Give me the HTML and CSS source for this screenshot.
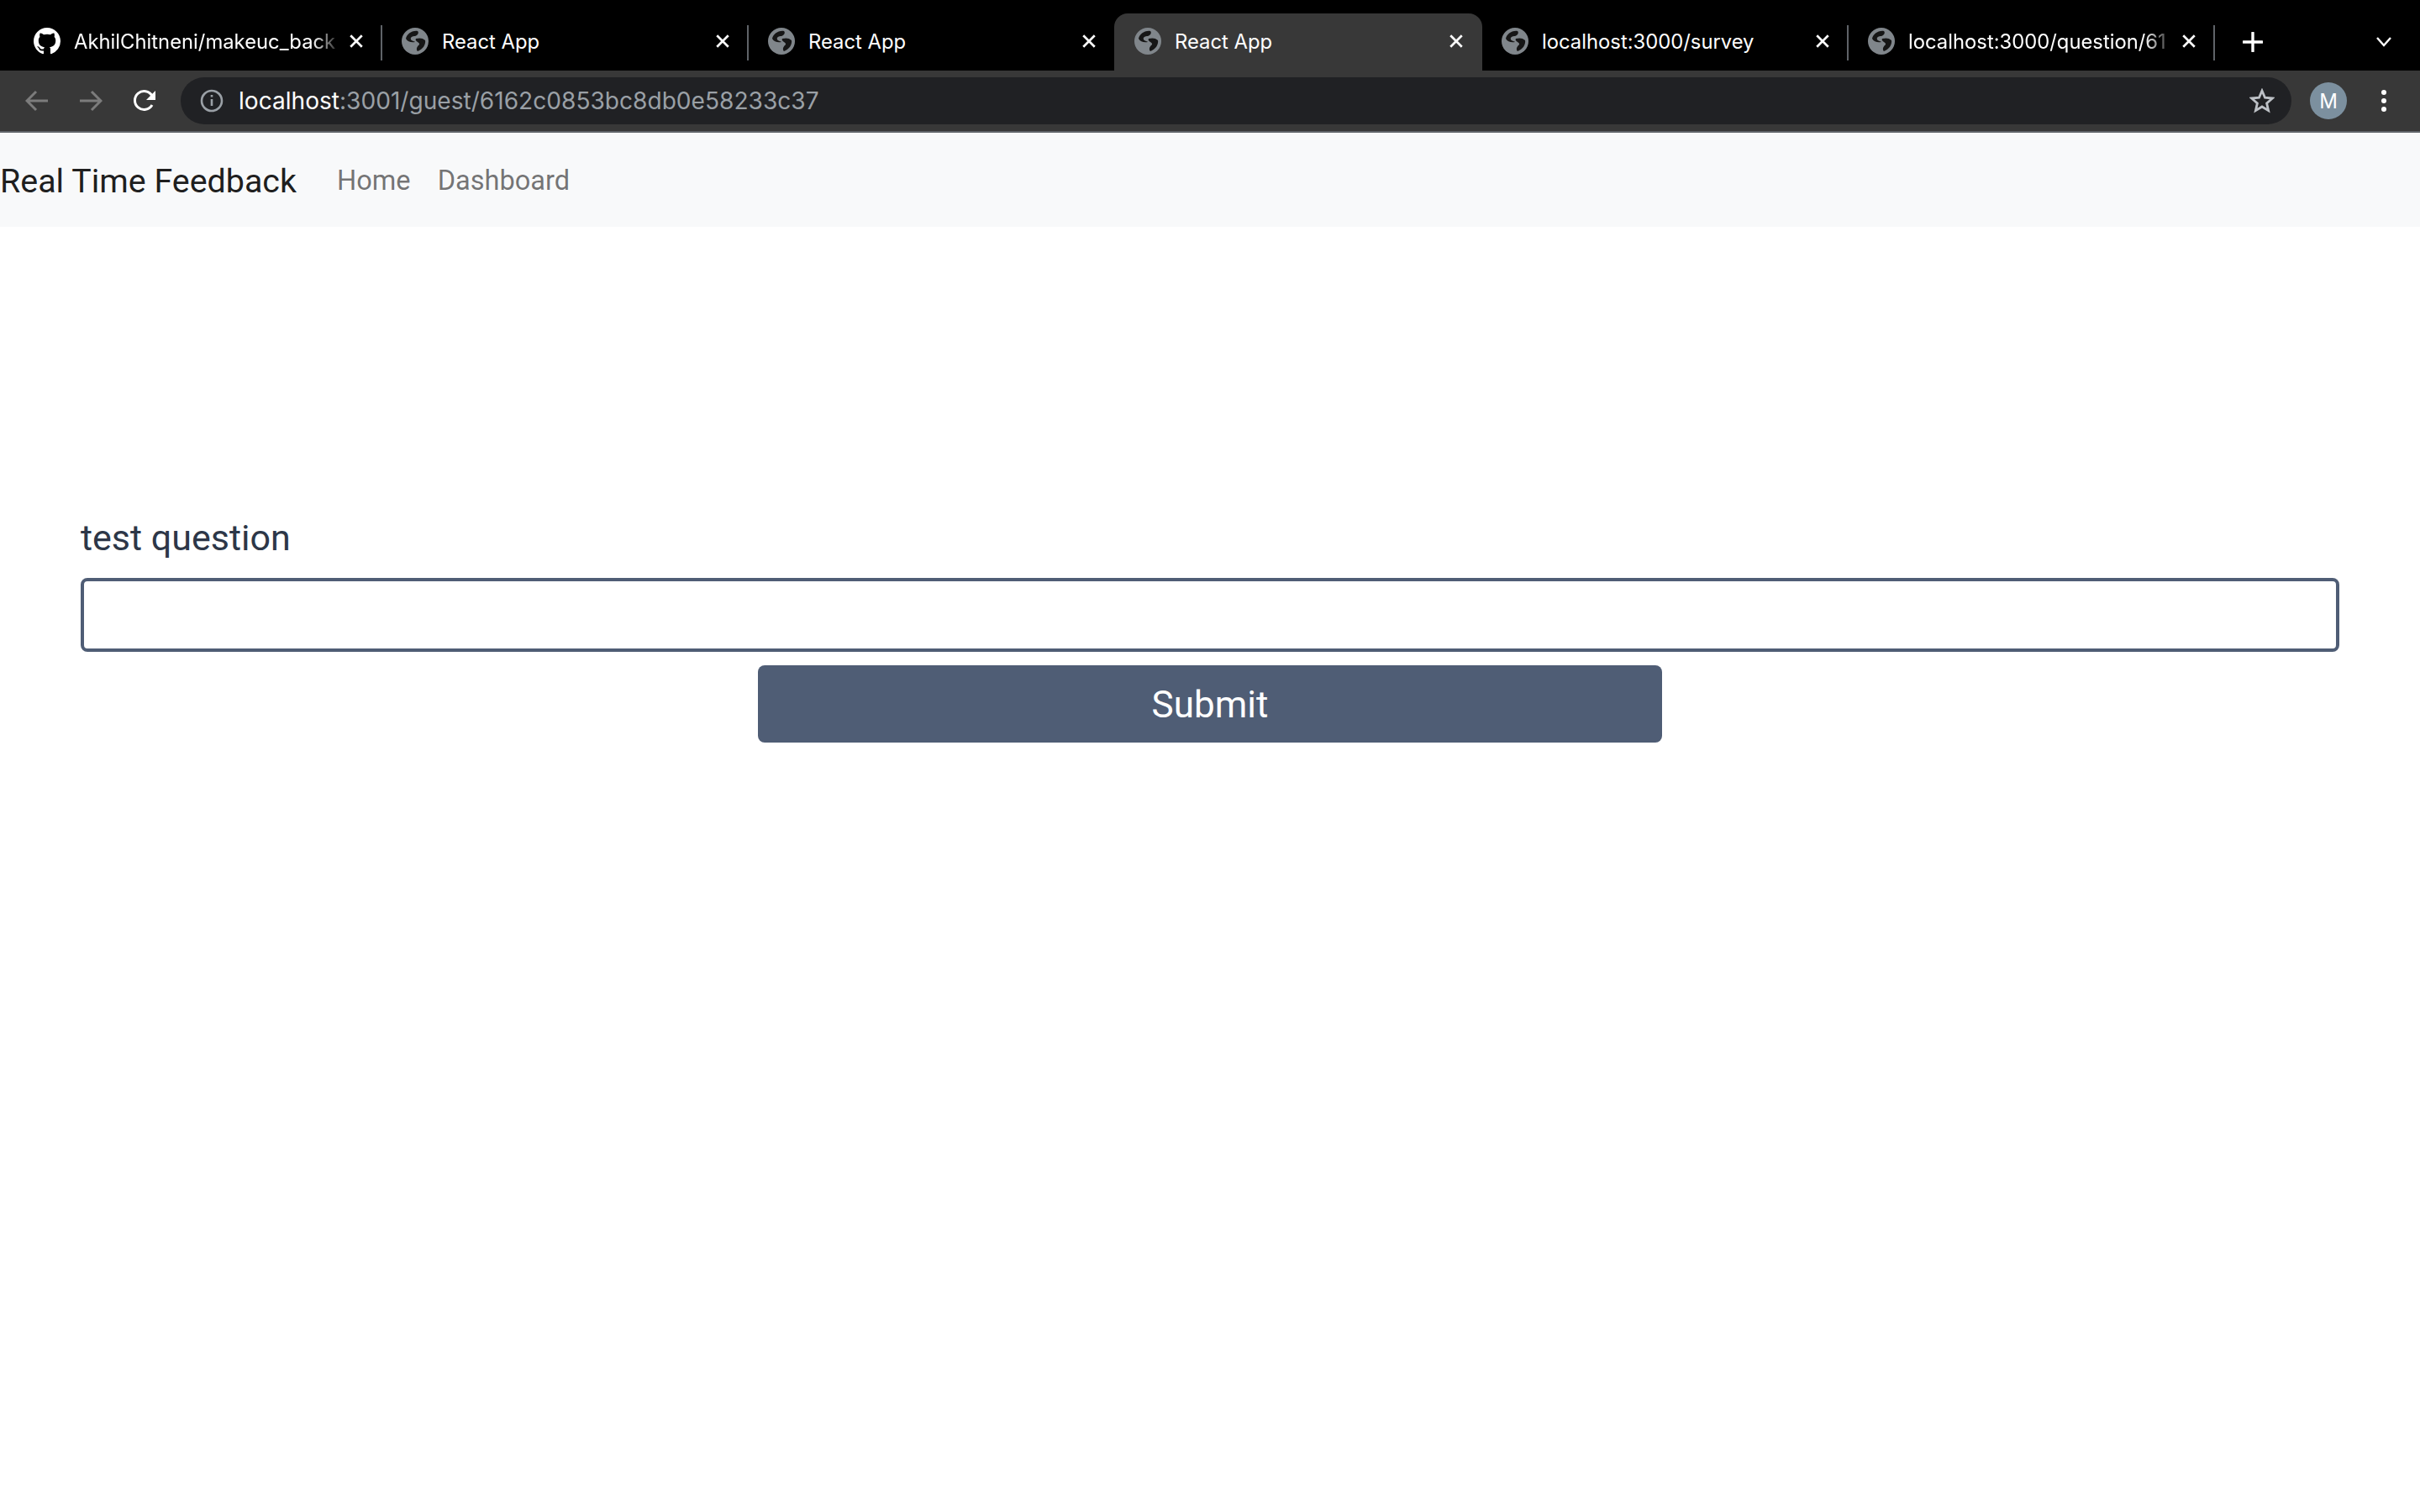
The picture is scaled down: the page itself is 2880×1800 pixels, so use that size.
FILE: index.html
```html
<!DOCTYPE html>
<html lang="en">
<head>
    <meta charset="UTF-8">
    <title>React App</title>
    <link rel="stylesheet" href="styles.css">
</head>
<body>
    <svg class="sprite" width="0" height="0">
        <symbol id="globe" viewBox="0 0 32 32">
            <circle cx="16" cy="16" r="16" fill="#80868b"/>
            <path class="globe-land" d="M5 13C6 8 12 3 19 4c2 2 0 5-3 6-3 0-6 1-5 4 1 2 5 2 5 3-4 1-9 0-11-4z"/>
            <path class="globe-land" d="M17 13c4-1 8-1 11 2 1 5-3 11-9 13-2-2-1-5 1-7 2-1 1-3-1-4-2-1-3-3-2-4z"/>
        </symbol>
    </svg>

    <!-- browser tabs -->
    <div class="tab-strip">
        <div class="tab tab-first">
            <svg class="favicon" viewBox="0 0 16 16"><path fill="#fff" d="M8 0C3.58 0 0 3.58 0 8c0 3.54 2.29 6.53 5.47 7.59.4.07.55-.17.55-.38 0-.19-.01-.82-.01-1.49-2.01.37-2.53-.49-2.69-.94-.09-.23-.48-.94-.82-1.13-.28-.15-.68-.52-.01-.53.63-.01 1.08.58 1.23.82.72 1.21 1.87.87 2.33.66.07-.52.28-.87.51-1.07-1.78-.2-3.64-.89-3.64-3.95 0-.87.31-1.59.82-2.15-.08-.2-.36-1.02.08-2.12 0 0 .67-.21 2.2.82.64-.18 1.32-.27 2-.27.68 0 1.36.09 2 .27 1.53-1.04 2.2-.82 2.2-.82.44 1.1.16 1.92.08 2.12.51.56.82 1.27.82 2.15 0 3.07-1.87 3.75-3.65 3.95.29.25.54.73.54 1.48 0 1.07-.01 1.93-.01 2.2 0 .21.15.46.55.38A8.013 8.013 0 0016 8c0-4.42-3.58-8-8-8z"/></svg>
            <span class="tab-title tab-title-fade">AkhilChitneni/makeuc_back</span>
            <svg class="tab-close" viewBox="0 0 16 16"><path d="M2 2l12 12M14 2L2 14"/></svg>
        </div>
        <div class="tab">
            <svg class="favicon"><use href="#globe"/></svg>
            <span class="tab-title">React App</span>
            <svg class="tab-close" viewBox="0 0 16 16"><path d="M2 2l12 12M14 2L2 14"/></svg>
        </div>
        <div class="tab tab-before-active">
            <svg class="favicon"><use href="#globe"/></svg>
            <span class="tab-title">React App</span>
            <svg class="tab-close" viewBox="0 0 16 16"><path d="M2 2l12 12M14 2L2 14"/></svg>
        </div>
        <div class="tab tab-active">
            <svg class="favicon"><use href="#globe"/></svg>
            <span class="tab-title">React App</span>
            <svg class="tab-close" viewBox="0 0 16 16"><path d="M2 2l12 12M14 2L2 14"/></svg>
        </div>
        <div class="tab">
            <svg class="favicon"><use href="#globe"/></svg>
            <span class="tab-title">localhost:3000/survey</span>
            <svg class="tab-close" viewBox="0 0 16 16"><path d="M2 2l12 12M14 2L2 14"/></svg>
        </div>
        <div class="tab">
            <svg class="favicon"><use href="#globe"/></svg>
            <span class="tab-title tab-title-fade">localhost:3000/question/61</span>
            <svg class="tab-close" viewBox="0 0 16 16"><path d="M2 2l12 12M14 2L2 14"/></svg>
        </div>
        <svg class="new-tab" viewBox="0 0 24 24"><path d="M12 1v22M1 12h22"/></svg>
        <svg class="tab-search" viewBox="0 0 18 12"><path d="M1 1l8 9 8-9"/></svg>
    </div>

    <!-- browser toolbar -->
    <div class="toolbar">
        <svg class="nav-icon nav-off" viewBox="0 0 28 26"><path d="M27 13H3M13 2L2 13l11 11"/></svg>
        <svg class="nav-icon nav-off" viewBox="0 0 28 26"><path d="M1 13h24M15 2l11 11-11 11"/></svg>
        <svg class="nav-icon nav-reload" viewBox="0 0 28 28"><path d="M23 19a11 11 0 1 1 0-11"/><path class="solid" d="M27 2v11H16z"/></svg>
        <div class="omnibox">
            <svg class="info-icon" viewBox="0 0 28 28"><circle cx="14" cy="14" r="12"/><path d="M14 12v8M14 7v2.6"/></svg>
            <span class="url"><span class="url-host">localhost</span>:3001/guest/6162c0853bc8db0e58233c37</span>
            <svg class="star-icon" viewBox="0 0 30 30"><path d="M15 3l3.500 8.200 8.900.8-6.800 5.900 2 8.700-7.600-4.600-7.600 4.600 2-8.700L2.600 12l8.900-.8z"/></svg>
        </div>
        <div class="avatar">M</div>
        <svg class="menu-icon" viewBox="0 0 8 28"><circle cx="4" cy="4" r="3"/><circle cx="4" cy="14" r="3"/><circle cx="4" cy="24" r="3"/></svg>
    </div>

    <!-- page -->
    <nav class="navbar">
        <a class="brand">Real Time Feedback</a>
        <a class="nav-link">Home</a>
        <a class="nav-link">Dashboard</a>
    </nav>

    <main class="content">
        <label class="question" for="answer">test question</label>
        <input class="answer" id="answer" type="text">
        <button class="submit">Submit</button>
    </main>
</body>
</html>
```

FILE: styles.css
```css
* {
    margin: 0;
    padding: 0;
    box-sizing: border-box;
}

body {
    font-family: Inter, "Liberation Sans", sans-serif;
    background-color: #fff;
    width: 2880px;
    height: 1800px;
    overflow: hidden;
}

.sprite {
    position: absolute;
}

/* tabs */
.tab-strip {
    height: 84px;
    background-color: #000;
    display: flex;
    align-items: flex-end;
    padding-left: 19px;
}

.tab {
    width: 436px;
    height: 68px;
    padding: 0 20px 2px 23px;
    display: flex;
    align-items: center;
    color: #fff;
    font-size: 23.8px;
    border-right: 2px solid #5f6368;
    background-clip: padding-box;
    border-image: linear-gradient(to bottom, transparent 15px, #5f6368 15px, #5f6368 55px, transparent 55px) 1;
}

.tab-first {
    padding-left: 21px;
}

.tab-before-active {
    border-image: none;
    border-right-color: transparent;
}

.tab-active {
    background-color: #383838;
    border-radius: 16px 16px 0 0;
    border-image: none;
    border-right-color: transparent;
    background-clip: border-box;
    width: 438px;
    margin-left: -1px;
    padding-left: 24px;
}

.favicon {
    width: 32px;
    height: 32px;
    flex-shrink: 0;
}

.globe-land {
    fill: #161616;
}

.tab-title {
    flex: 1;
    margin-left: 16px;
    white-space: nowrap;
    overflow: hidden;
}

.tab-title-fade {
    -webkit-mask-image: linear-gradient(to right, #000 calc(100% - 36px), transparent 100%);
    mask-image: linear-gradient(to right, #000 calc(100% - 36px), transparent 100%);
}

.tab-close {
    width: 18px;
    height: 18px;
    margin-left: 8px;
    flex-shrink: 0;
}

.tab-close path {
    stroke: #fff;
    stroke-width: 2.4;
    fill: none;
}

.new-tab {
    width: 24px;
    height: 24px;
    margin: 0 0 22px 33px;
}

.new-tab path {
    stroke: #fff;
    stroke-width: 3.4;
    stroke-linecap: round;
    fill: none;
}

.tab-search {
    width: 18px;
    height: 12px;
    margin: 0 0 28px 135px;
}

.tab-search path {
    stroke: #fff;
    stroke-width: 2.4;
    fill: none;
}

/* toolbar */
.toolbar {
    height: 74px;
    background-color: #383838;
    border-bottom: 2px solid #5f6368;
    display: flex;
    align-items: center;
    padding-left: 30px;
}

.nav-icon {
    width: 28px;
    height: 28px;
    margin-right: 36px;
    flex-shrink: 0;
}

.nav-icon path {
    stroke-width: 3;
    fill: none;
}

.nav-off path {
    stroke: #7c7c7c;
}

.nav-reload path {
    stroke: #fff;
}

.nav-reload .solid {
    fill: #fff;
    stroke: none;
}

.omnibox {
    width: 2512px;
    height: 56px;
    margin-left: -7px;
    background-color: #202124;
    border-radius: 28px;
    display: flex;
    align-items: center;
    padding: 0 20px 0 23px;
}

.info-icon {
    width: 28px;
    height: 28px;
    flex-shrink: 0;
}

.info-icon circle,
.info-icon path {
    stroke: #9aa0a6;
    stroke-width: 2.6;
    fill: none;
}

.url {
    flex: 1;
    margin-left: 18px;
    color: #9aa0a6;
    font-size: 28.1px;
    white-space: nowrap;
}

.url-host {
    color: #fff;
}

.star-icon {
    width: 30px;
    height: 30px;
    flex-shrink: 0;
}

.star-icon path {
    stroke: #bdc1c6;
    stroke-width: 2.8;
    fill: none;
}

.avatar {
    width: 44px;
    height: 44px;
    margin-left: 22px;
    border-radius: 50%;
    background-color: #7c909f;
    color: #fff;
    font-size: 24px;
    display: flex;
    align-items: center;
    justify-content: center;
    flex-shrink: 0;
}

.menu-icon {
    width: 8px;
    height: 28px;
    margin-left: 40px;
    flex-shrink: 0;
}

.menu-icon circle {
    fill: #fff;
}

/* navbar */
.navbar {
    height: 112px;
    padding-top: 2px;
    background-color: #f8f9fa;
    display: flex;
    align-items: center;
    font-family: Roboto, Inter, sans-serif;
}

.brand {
    font-size: 39.4px;
    color: rgba(0, 0, 0, 0.9);
    margin-right: 32px;
    white-space: nowrap;
}

.nav-link {
    font-size: 32.6px;
    color: rgba(0, 0, 0, 0.55);
    padding: 0 16px;
}

/* form */
.content {
    padding: 344px 96px 0;
    display: flex;
    flex-direction: column;
    align-items: center;
}

.question {
    align-self: flex-start;
    font-family: Roboto, Inter, sans-serif;
    font-size: 43px;
    line-height: 52px;
    color: #2d3748;
    margin-bottom: 22px;
}

.answer {
    width: 100%;
    height: 88px;
    border: 4px solid #4f5d75;
    border-radius: 8px;
    background-color: #fff;
    outline: none;
}

.submit {
    width: 1076px;
    height: 92px;
    margin-top: 16px;
    padding-top: 2px;
    border: none;
    border-radius: 8px;
    background-color: #4f5d75;
    color: #fff;
    font-family: Roboto, Inter, sans-serif;
    font-size: 44px;
}
```
